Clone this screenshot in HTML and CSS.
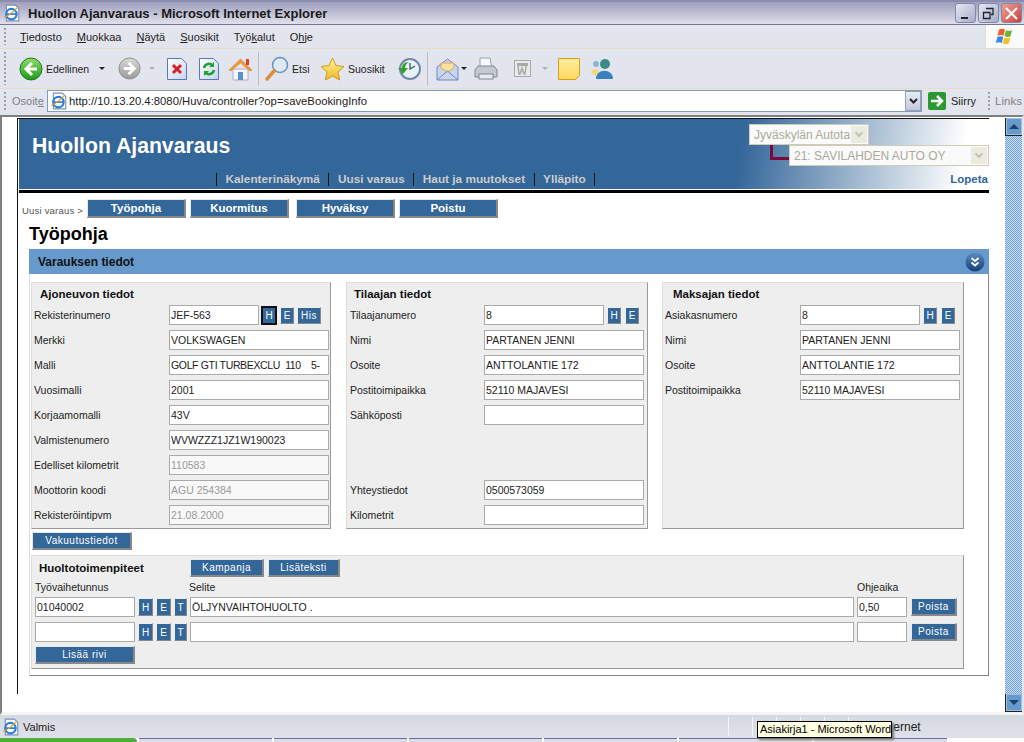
FILE: index.html
```html
<!DOCTYPE html>
<html lang="en">
<head>
    <meta charset="UTF-8">
    <title>Huollon Ajanvaraus - Microsoft Internet Explorer</title>
    <link rel="stylesheet" href="styles.css">
</head>
<body>
<div class="window">
    <svg class="defs" width="0" height="0">
        <defs>
            <linearGradient id="gGreen" x1="0" y1="0" x2="0" y2="1"><stop offset="0" stop-color="#8fdc6a"/><stop offset="1" stop-color="#1d9a1d"/></linearGradient>
            <linearGradient id="gGray" x1="0" y1="0" x2="0" y2="1"><stop offset="0" stop-color="#d8d8d8"/><stop offset="1" stop-color="#9a9a9a"/></linearGradient>
            <linearGradient id="gDoc" x1="0" y1="0" x2="1" y2="1"><stop offset="0" stop-color="#ffffff"/><stop offset="1" stop-color="#c4d4f0"/></linearGradient>
            <linearGradient id="gStar" x1="0" y1="0" x2="0" y2="1"><stop offset="0" stop-color="#fff6a0"/><stop offset="1" stop-color="#f0b820"/></linearGradient>
            <linearGradient id="gNote" x1="0" y1="0" x2="0" y2="1"><stop offset="0" stop-color="#ffeea0"/><stop offset="1" stop-color="#ffd860"/></linearGradient>
            <linearGradient id="gBall" x1="0" y1="0" x2="0" y2="1"><stop offset="0" stop-color="#5d8cc0"/><stop offset="1" stop-color="#123f75"/></linearGradient>
            <symbol id="ie" viewBox="0 0 16 16">
                <path d="M3 1h8l3 3v11H3z" fill="#fff" stroke="#7d8fb8"/>
                <circle cx="7.5" cy="9" r="4.6" fill="none" stroke="#2a7fd8" stroke-width="2"/>
                <path d="M3.5 9h8" stroke="#2a7fd8" stroke-width="1.5"/>
                <path d="M1 12c3-1 9-6 12-9" fill="none" stroke="#e0a020" stroke-width="1"/>
            </symbol>
        </defs>
    </svg>

    <div class="titlebar">
        <svg class="title-icon" width="18" height="18"><use href="#ie"/></svg>
        <span class="title-text">Huollon Ajanvaraus - Microsoft Internet Explorer</span>
        <div class="win-buttons">
            <div class="win-btn"><svg width="19" height="19"><path d="M5 14h7" stroke="#223" stroke-width="2"/></svg></div>
            <div class="win-btn"><svg width="19" height="19"><path d="M7 4.500h7v6h-2M4.500 8.500h6.500v6h-6.500z" fill="none" stroke="#223" stroke-width="1.300"/></svg></div>
            <div class="win-btn win-close"><svg width="19" height="19"><path d="M4 4l11 11M15 4L4 15" stroke="#fff" stroke-width="2.200"/></svg></div>
        </div>
    </div>

    <div class="menubar">
        <div class="grip"></div>
        <nav class="menu">
            <span><u>T</u>iedosto</span>
            <span><u>M</u>uokkaa</span>
            <span><u>N</u>äytä</span>
            <span><u>S</u>uosikit</span>
            <span>Työ<u>k</u>alut</span>
            <span>O<u>h</u>je</span>
        </nav>
        <div class="flag">
            <svg width="20" height="20" viewBox="0 0 20 20">
                <path d="M4 2.500c2 -1 4 -1 6 .3l-1.500 6c-2 -1.200 -4 -1 -6 0z" fill="#e8602a"/>
                <path d="M11 3.300c2 1 4 1 6 0l-1.500 6c-2 1 -4 .8 -6 -.3z" fill="#70b030"/>
                <path d="M2.300 10c2 -1 4 -1 6 0l-1.500 6c-2 -1 -4 -1 -6 0z" fill="#3a88e0"/>
                <path d="M9.300 10.500c2 1 4 1 6 0l-1.500 6c-2 1 -4 1 -6 0z" fill="#f8c020"/>
            </svg>
        </div>
    </div>

    <div class="toolbar">
        <div class="grip"></div>
        <svg class="tool back" width="24" height="24" viewBox="0 0 24 24"><circle cx="12" cy="12" r="11" fill="url(#gGreen)" stroke="#1b7c1b"/><path d="M13 6l-6 6 6 6M7 12h11" fill="none" stroke="#fff" stroke-width="3"/></svg>
        <span class="tool-label label-back">Edellinen</span>
        <span class="caret caret-back"></span>
        <svg class="tool forward" width="23" height="23" viewBox="0 0 24 24"><circle cx="12" cy="12" r="11" fill="url(#gGray)" stroke="#8c8c8c"/><path d="M11 6l6 6-6 6M17 12H6" fill="none" stroke="#fff" stroke-width="3"/></svg>
        <span class="caret caret-off"></span>
        <svg class="tool stop" width="20" height="24" viewBox="0 0 20 24"><path d="M.5 1.500h14l5 5v16H.5z" fill="url(#gDoc)" stroke="#5b78b8"/><path d="M6 8l8 8M14 8l-8 8" stroke="#d82020" stroke-width="3"/></svg>
        <svg class="tool refresh" width="20" height="24" viewBox="0 0 20 24"><path d="M.5 1.500h14l5 5v16H.5z" fill="url(#gDoc)" stroke="#5b78b8"/><path d="M5 11a5 5 0 0 1 9-2M15 13a5 5 0 0 1-9 2" fill="none" stroke="#20a030" stroke-width="2.500"/><path d="M15 5v5h-5zM5 19v-5h5z" fill="#20a030"/></svg>
        <svg class="tool home" width="25" height="24" viewBox="0 0 25 24"><path d="M5 12v11h15V12z" fill="#f4f4fa" stroke="#a8b0c8"/><path d="M1 13L12.500 2 24 13l-2 1-9.500-8L3 14z" fill="#f09a3a" stroke="#d87820" stroke-width=".5"/><rect x="18" y="2" width="3" height="6" fill="#d84020"/><rect x="10" y="15" width="5" height="8" fill="#5b90d0"/></svg>
        <span class="tool-sep sep-a"></span>
        <svg class="tool search" width="24" height="25" viewBox="0 0 24 25"><circle cx="15" cy="9" r="7.500" fill="#dbeaf8" stroke="#6b92b8" stroke-width="1.500"/><path d="M9.500 14.500L2 23" stroke="#d89040" stroke-width="3.500" stroke-linecap="round"/></svg>
        <span class="tool-label label-etsi">Etsi</span>
        <svg class="tool star" width="25" height="24" viewBox="0 0 25 24"><path d="M12.500 1l3.500 7.500 8 1-6 5.500 1.700 8-7.200-4-7.200 4 1.700-8-6-5.500 8-1z" fill="url(#gStar)" stroke="#cf9a10"/></svg>
        <span class="tool-label label-fav">Suosikit</span>
        <svg class="tool history" width="24" height="24" viewBox="0 0 24 24"><circle cx="13" cy="12" r="10" fill="#e8f0f8" stroke="#7088a8" stroke-width="2"/><path d="M13 6v6l5-3" fill="none" stroke="#456" stroke-width="1.300"/><path d="M1 11l5 6 5-6H8c0-3 2-5 4-6-5 0-7 3-7 6z" fill="#30a030"/></svg>
        <span class="tool-sep sep-b"></span>
        <svg class="tool mail" width="23" height="24" viewBox="0 0 23 24"><path d="M1 10L11.500 2 22 10v13H1z" fill="#c8d4f0" stroke="#7088c0"/><path d="M5 11V6h13v5l-6.500 4z" fill="#ffe0a0" stroke="#d8a860"/><path d="M1 23l10.500-9L22 23" fill="none" stroke="#7088c0"/></svg>
        <span class="caret caret-mail"></span>
        <svg class="tool print" width="24" height="24" viewBox="0 0 24 24"><path d="M6 1h10l2 10H6z" fill="#f4f8ff" stroke="#98a0b0"/><path d="M1 13l3-4h16l3 4v7H1z" fill="#c4c8d0" stroke="#808890"/><rect x="5" y="17" width="14" height="5" fill="#e8e8f0" stroke="#808890"/></svg>
        <svg class="tool word" width="17" height="17" viewBox="0 0 17 17"><rect x=".5" y=".5" width="16" height="16" fill="#eaeaea" stroke="#a8a8a8"/><rect x="3" y="3" width="11" height="3" fill="#a8a8a8"/><path d="M4 6l1 8h1l2-6 2 6h1l1-8" fill="none" stroke="#a8a8a8" stroke-width="1.500"/></svg>
        <span class="caret caret-off caret-word"></span>
        <svg class="tool note" width="22" height="22" viewBox="0 0 22 22"><path d="M.5.500h21v17l-4 4h-17z" fill="url(#gNote)" stroke="#d8a010"/></svg>
        <svg class="tool msn" width="24" height="22" viewBox="0 0 24 22"><circle cx="6" cy="6" r="3" fill="#88b8d8"/><path d="M1 15c0-5 8-5 8 0l-3 3z" fill="#f0d880"/><circle cx="15" cy="6" r="5" fill="#3a8a8a"/><path d="M6 21c0-11 17-11 17 0z" fill="#3a80c0"/></svg>
    </div>

    <div class="addressbar">
        <div class="grip"></div>
        <span class="addr-label">Osoit<u>e</u></span>
        <div class="addr-box">
            <svg width="18" height="18"><use href="#ie"/></svg>
            <span class="addr-url">http://10.13.20.4:8080/Huva/controller?op=saveBookingInfo</span>
            <span class="addr-drop"><svg width="9" height="7"><path d="M1 1l3.500 3.500L8 1" fill="none" stroke="#223" stroke-width="2"/></svg></span>
        </div>
        <svg class="go" width="18" height="18" viewBox="0 0 18 18"><rect width="18" height="18" rx="2" fill="#2a9a30"/><path d="M3 9h10M9 4l5 5-5 5" fill="none" stroke="#fff" stroke-width="2.500"/></svg>
        <span class="go-label">Siirry</span>
        <div class="grip grip-links"></div>
        <span class="links">Links</span>
    </div>

    <div class="viewport">
        <div class="page">
            <div class="frame">
                <header class="banner">
                    <h2 class="brand">Huollon Ajanvaraus</h2>
                    <div class="org-select org-main">Jyväskylän Autota<span class="org-drop"></span></div>
                    <span class="org-link"></span>
                    <div class="org-select org-sub">21: SAVILAHDEN AUTO OY<span class="org-drop"></span></div>
                    <nav class="mainnav">
                        <span>Kalenterinäkymä</span>
                        <span>Uusi varaus</span>
                        <span>Haut ja muutokset</span>
                        <span>Ylläpito</span>
                    </nav>
                    <span class="logout">Lopeta</span>
                </header>

                <div class="crumbs">
                    <span class="crumb-text">Uusi varaus &gt;</span>
                    <button class="btn-main">Työpohja</button>
                    <button class="btn-main btn-b">Kuormitus</button>
                    <button class="btn-main btn-c">Hyväksy</button>
                    <button class="btn-main btn-b">Poistu</button>
                </div>

                <h1 class="page-title">Työpohja</h1>

                <section class="booking">
                    <div class="booking-head">
                        <span>Varauksen tiedot</span>
                        <svg width="20" height="20" viewBox="0 0 20 20"><circle cx="10" cy="10" r="9.500" fill="url(#gBall)"/><path d="M6.500 6l3.500 3 3.500-3M6.500 10.500l3.500 3 3.500-3" fill="none" stroke="#fff" stroke-width="1.800"/></svg>
                    </div>
                    <div class="booking-body">
                        <div class="columns">
                            <div class="fields fields-car">
                                <h3>Ajoneuvon tiedot</h3>
                                <div class="row"><label>Rekisterinumero</label><input class="short" value="JEF-563"><button class="mini mini-first focus">H</button><button class="mini">E</button><button class="mini mini-his">His</button></div>
                                <div class="row"><label>Merkki</label><input value="VOLKSWAGEN"></div>
                                <div class="row"><label>Malli</label><input class="tight" value="GOLF GTI TURBEXCLU  110    5-"></div>
                                <div class="row"><label>Vuosimalli</label><input value="2001"></div>
                                <div class="row"><label>Korjaamomalli</label><input value="43V"></div>
                                <div class="row"><label>Valmistenumero</label><input value="WVWZZZ1JZ1W190023"></div>
                                <div class="row"><label>Edelliset kilometrit</label><input class="off" value="110583"></div>
                                <div class="row"><label>Moottorin koodi</label><input class="off" value="AGU 254384"></div>
                                <div class="row"><label>Rekisteröintipvm</label><input class="off" value="21.08.2000"></div>
                            </div>
                            <div class="fields fields-orderer">
                                <h3>Tilaajan tiedot</h3>
                                <div class="row"><label>Tilaajanumero</label><input class="mid" value="8"><button class="mini mini-first">H</button><button class="mini">E</button></div>
                                <div class="row"><label>Nimi</label><input value="PARTANEN JENNI"></div>
                                <div class="row"><label>Osoite</label><input value="ANTTOLANTIE 172"></div>
                                <div class="row"><label>Postitoimipaikka</label><input value="52110 MAJAVESI"></div>
                                <div class="row"><label>Sähköposti</label><input value=""></div>
                                <div class="row"></div>
                                <div class="row"></div>
                                <div class="row"><label>Yhteystiedot</label><input value="0500573059"></div>
                                <div class="row"><label>Kilometrit</label><input value=""></div>
                            </div>
                            <div class="fields fields-payer">
                                <h3>Maksajan tiedot</h3>
                                <div class="row"><label>Asiakasnumero</label><input class="mid" value="8"><button class="mini mini-first">H</button><button class="mini">E</button></div>
                                <div class="row"><label>Nimi</label><input value="PARTANEN JENNI"></div>
                                <div class="row"><label>Osoite</label><input value="ANTTOLANTIE 172"></div>
                                <div class="row"><label>Postitoimipaikka</label><input value="52110 MAJAVESI"></div>
                            </div>
                        </div>

                        <button class="btn-sub btn-insurance">Vakuutustiedot</button>

                        <div class="jobs">
                            <div class="jobs-head">
                                <h3>Huoltotoimenpiteet</h3>
                                <button class="btn-sub btn-campaign">Kampanja</button>
                                <button class="btn-sub btn-extra">Lisäteksti</button>
                            </div>
                            <div class="job-labels">
                                <span class="col-code">Työvaihetunnus</span>
                                <span class="col-desc">Selite</span>
                                <span>Ohjeaika</span>
                            </div>
                            <div class="job-row">
                                <input class="job-code" value="01040002">
                                <button class="mini job-mini">H</button><button class="mini job-mini">E</button><button class="mini job-mini job-t">T</button>
                                <input class="job-desc" value="ÖLJYNVAIHTOHUOLTO .">
                                <input class="job-time" value="0,50">
                                <button class="btn-sub btn-del">Poista</button>
                            </div>
                            <div class="job-row">
                                <input class="job-code" value="">
                                <button class="mini job-mini">H</button><button class="mini job-mini">E</button><button class="mini job-mini job-t">T</button>
                                <input class="job-desc" value="">
                                <input class="job-time" value="">
                                <button class="btn-sub btn-del">Poista</button>
                            </div>
                            <button class="btn-sub btn-addrow">Lisää rivi</button>
                        </div>
                    </div>
                </section>
            </div>
        </div>
        <div class="scrollbar">
            <span class="scroll-btn"><i class="arrow-up"></i></span>
            <span class="scroll-track"></span>
            <span class="scroll-btn"><i class="arrow-down"></i></span>
        </div>
    </div>

    <div class="statusbar">
        <svg width="18" height="18"><use href="#ie"/></svg>
        <span class="status-text">Valmis</span>
        <span class="status-cells"><i></i><i></i><i></i><i></i><i></i><i></i></span>
        <span class="status-zone">Internet</span>
        <div class="tooltip">Asiakirja1 - Microsoft Word</div>
    </div>
    <div class="taskbar">
        <span class="start"></span>
        <span class="task-btn"></span>
        <span class="task-btn"></span>
        <span class="task-btn"></span>
        <span class="task-btn"></span>
        <span class="task-btn"></span>
        <span class="task-btn"></span>
    </div>
</div>
</body>
</html>
```

FILE: styles.css
```css
/* Browser chrome */
html, body {
    margin: 0;
    padding: 0;
    overflow: hidden;
}

.window {
    position: relative;
    width: 1024px;
    height: 742px;
    display: flex;
    flex-direction: column;
    overflow: hidden;
    background-color: #e1e4ec;
    font-family: "Liberation Sans", Arial, sans-serif;
    font-size: 11px;
    color: #000;
}

.defs {
    position: absolute;
}

.titlebar {
    height: 25px;
    flex: none;
    display: flex;
    align-items: center;
    box-sizing: border-box;
    padding-left: 3px;
    border-top: 2px solid #8c8cb0;
    border-bottom: 1px solid #77778c;
    background: linear-gradient(#a0a0bc, #b8b8d0 40%, #e0e0ec);
}

.title-icon {
    margin-right: 7px;
}

.title-text {
    font-size: 13px;
    font-weight: bold;
    color: #1a1a1a;
}

.win-buttons {
    margin-left: auto;
    display: flex;
    gap: 2px;
    padding-right: 2px;
}

.win-btn {
    width: 21px;
    height: 20px;
    box-sizing: border-box;
    border: 1px solid #8088a8;
    border-radius: 3px;
    overflow: hidden;
    background: linear-gradient(135deg, #e6e8f2, #a8acc8);
}

.win-close {
    background: linear-gradient(135deg, #f0a090, #c84040);
}

.grip {
    width: 2px;
    align-self: stretch;
    margin: 3px 0 3px 4px;
    background: repeating-linear-gradient(#a0a0a8 0, #a0a0a8 2px, transparent 2px, transparent 4px);
}

.menubar {
    height: 24px;
    flex: none;
    display: flex;
    align-items: center;
    box-sizing: border-box;
    border-bottom: 1px solid #e8e0c4;
    background-color: #e2e5ed;
}

.menu {
    display: flex;
    font-size: 11px;
    color: #222;
    padding-left: 14px;
}

.menu span {
    margin-right: 15px;
}

.flag {
    margin-left: auto;
    width: 38px;
    height: 23px;
    display: flex;
    align-items: center;
    justify-content: center;
    border-left: 1px solid #e8e0c4;
    background-color: #fafafa;
}

.toolbar {
    height: 40px;
    flex: none;
    display: flex;
    align-items: center;
    box-sizing: border-box;
    border-bottom: 1px solid #e8e0c4;
    background-color: #e2e5ed;
}

.tool {
    flex: none;
}

.back { margin-left: 13px; }
.forward { margin-left: 13px; }
.stop { margin-left: 12px; }
.refresh { margin-left: 12px; }
.home { margin-left: 9px; }
.search { margin-left: 6px; }
.star { margin-left: 10px; }
.history { margin-left: 13px; }
.mail { margin-left: 8px; }
.print { margin-left: 7px; }
.word { margin-left: 16px; }
.note { margin-left: 10px; }
.msn { margin-left: 10px; }

.tool-label {
    margin-left: 3px;
    font-size: 10.5px;
    color: #222;
    flex: none;
}

.label-back { width: 42px; }
.label-etsi { width: 18px; }
.label-fav { width: 36px; }

.tool-sep {
    width: 1px;
    height: 34px;
    background-color: #b8bcc8;
}

.sep-a { margin-left: 5px; }
.sep-b { margin-left: 6px; }

.caret {
    width: 0;
    height: 0;
    border-left: 3px solid transparent;
    border-right: 3px solid transparent;
    border-top: 3px solid #222;
}

.caret-back { margin-left: 11px; }
.caret-off { margin-left: 8px; border-top-color: #b0b0b8; }
.caret-mail { margin-left: 2px; }
.caret-word { margin-left: 11px; }

.addressbar {
    height: 26px;
    flex: none;
    display: flex;
    align-items: center;
    box-sizing: border-box;
    padding-bottom: 2px;
    background-color: #e2e5ed;
}

.addr-label {
    margin-left: 6px;
    color: #808088;
    width: 35px;
}

.addr-box {
    width: 875px;
    height: 22px;
    box-sizing: border-box;
    display: flex;
    align-items: center;
    border: 1px solid #7f9db9;
    background-color: #fff;
    padding-left: 2px;
}

.addr-url {
    margin-left: 1px;
    font-size: 11.3px;
    color: #222;
}

.addr-drop {
    margin-left: auto;
    width: 16px;
    height: 20px;
    display: flex;
    align-items: center;
    justify-content: center;
    background: linear-gradient(#e8eaf4, #c4c8dc);
    border: 1px solid #98a0b8;
    box-sizing: border-box;
}

.go {
    margin-left: 6px;
}

.go-label {
    margin-left: 5px;
    color: #222;
}

.grip-links {
    margin-left: 12px;
}

.links {
    margin-left: 5px;
    font-size: 11.5px;
    color: #808088;
}

.viewport {
    flex: 1;
    display: flex;
    min-height: 0;
    box-sizing: border-box;
    padding-top: 1px;
    border-left: 2px solid #808080;
    border-right: 2px solid #e2e5ed;
    border-top: 2px solid #808080;
    border-bottom: 3px solid #f4f4f4;
    background-color: #fff;
}

.page {
    flex: 1;
    padding-left: 15px;
}

.scrollbar {
    width: 17px;
    display: flex;
    flex-direction: column;
}

.scroll-btn {
    height: 17px;
    display: flex;
    align-items: center;
    justify-content: center;
    background-color: #6699cc;
    box-shadow: inset 0 0 0 1px #9cc0e4;
    border-left: 1px solid #222;
    border-bottom: 1px solid #222;
}

.scroll-track {
    flex: 1;
    background-color: #88b0e0;
    background-image: repeating-conic-gradient(#6e9fdb 0 25%, #cfe0f4 0 50%);
    background-size: 2px 2px;
}

.arrow-up, .arrow-down {
    width: 0;
    height: 0;
    border-left: 5px solid transparent;
    border-right: 5px solid transparent;
}

.arrow-up { border-bottom: 5px solid #1f3f6a; }
.arrow-down { border-top: 5px solid #1f3f6a; }

/* Application page */
.frame {
    width: 972px;
    height: 576px;
    box-sizing: border-box;
    padding-left: 1px;
    border-left: 1px solid #111;
    border-top: 1px solid #111;
}

.banner {
    position: relative;
    height: 71px;
    box-sizing: border-box;
    border-bottom: 1px solid #fff;
    background: linear-gradient(98deg, #336699 0, #336699 74%, #ffffff 97%);
}

.brand {
    margin: 0;
    padding: 14px 0 0 13px;
    font-size: 21.2px;
    line-height: 25px;
    font-weight: bold;
    color: #fff;
}

.org-select {
    position: absolute;
    box-sizing: border-box;
    height: 21px;
    display: flex;
    align-items: center;
    padding-left: 4px;
    border: 1px solid #cfcdb8;
    background-color: #fafafa;
    font-size: 12px;
    color: #aba99a;
}

.org-main {
    left: 730px;
    top: 5px;
    width: 120px;
}

.org-sub {
    left: 770px;
    top: 26px;
    width: 200px;
}

.org-drop {
    position: absolute;
    right: 1px;
    top: 1px;
    width: 16px;
    height: 17px;
    background-color: #ecebe0;
}

.org-drop::after {
    content: "";
    position: absolute;
    left: 5px;
    top: 4px;
    width: 4px;
    height: 4px;
    border-right: 2px solid #c4c4b4;
    border-bottom: 2px solid #c4c4b4;
    transform: rotate(45deg);
}

.org-link {
    position: absolute;
    left: 751px;
    top: 26px;
    width: 17px;
    height: 12px;
    border-left: 3px solid #7a0a3a;
    border-bottom: 3px solid #7a0a3a;
}

.mainnav {
    position: absolute;
    left: 197px;
    top: 54px;
    display: flex;
    font-size: 11.8px;
    font-weight: bold;
    color: #ccc;
    border-right: 1px solid #111;
}

.mainnav span {
    border-left: 1px solid #111;
    padding: 0 8.5px;
    line-height: 13px;
}

.logout {
    position: absolute;
    right: 1px;
    top: 54px;
    font-size: 11.5px;
    font-weight: bold;
    color: #336699;
}

.crumbs {
    display: flex;
    align-items: center;
    border-top: 3px solid #000;
    padding: 6px 0 0 3px;
    height: 19px;
}

.crumb-text {
    width: 65px;
    flex: none;
    font-size: 9.5px;
    letter-spacing: 0.2px;
    white-space: nowrap;
    color: #555;
    padding-top: 3px;
}

button {
    font-family: "Liberation Sans", Arial, sans-serif;
    cursor: pointer;
    padding: 0;
    background-color: #336699;
    color: #fff;
    border-style: solid;
    border-width: 1px 2px 2px 1px;
    border-color: #e8e8e8 #888 #888 #e8e8e8;
}

.btn-main {
    width: 99px;
    height: 19px;
    font-size: 11.5px;
    font-weight: bold;
    margin-right: 4px;
}

.btn-b { margin-right: 7px; }
.btn-c { margin-right: 4px; }

.page-title {
    margin: 0;
    padding: 6px 0 5px 10px;
    font-size: 18px;
    line-height: 20px;
    color: #000;
}

.booking {
    width: 960px;
    margin-left: 10px;
}

.booking-head {
    height: 25px;
    display: flex;
    align-items: center;
    justify-content: space-between;
    padding: 0 4px 0 9px;
    background-color: #6699cc;
    font-size: 12px;
    font-weight: bold;
    color: #111;
}

.booking-body {
    box-sizing: border-box;
    height: 402px;
    padding: 8px 0 0 1px;
    border-right: 1px solid #888;
    border-bottom: 1px solid #888;
    border-left: 1px solid #ddd;
}

.columns {
    display: flex;
    height: 247px;
}

.fields {
    box-sizing: border-box;
    height: 247px;
    background-color: #eee;
    border: 1px solid #ddd;
    border-right-color: #999;
    border-bottom-color: #999;
    padding-left: 2px;
}

.fields-car { width: 300px; margin-right: 15px; }
.fields-orderer { width: 302px; margin-right: 14px; }
.fields-payer { width: 302px; }

.fields h3, .jobs h3 {
    margin: 0;
    font-size: 11.5px;
    line-height: 14px;
    color: #111;
}

.fields h3 {
    padding: 4px 0 4px 6px;
}

.fields-orderer h3 { padding-left: 5px; }
.fields-payer h3 { padding-left: 8px; }

.row {
    height: 25px;
    display: flex;
    align-items: flex-start;
}

.row label {
    width: 135px;
    flex: none;
    font-size: 10.5px;
    line-height: 20px;
    color: #222;
}

.fields-orderer .row label { padding-left: 1px; box-sizing: border-box; }

input {
    box-sizing: border-box;
    width: 160px;
    height: 20px;
    padding: 0 1px;
    border: 1px solid #aaa;
    background-color: #fff;
    font-family: "Liberation Sans", Arial, sans-serif;
    font-size: 10.5px;
    color: #222;
}

input.short { width: 90px; }
input.mid { width: 120px; }
input.off { color: #999; background-color: #f8f8f8; }
input.tight { letter-spacing: -0.35px; }

.mini {
    width: 14px;
    height: 17px;
    margin: 2px 4px 0 0;
    font-size: 10px;
    border-width: 1px;
    border-color: #eee #888 #888 #eee;
}

.mini-first { margin-left: 3px; }
.mini-his { width: 24px; margin-left: -1px; letter-spacing: 0.5px; }

.focus {
    outline: 2px solid #111;
    outline-offset: -1px;
}

.btn-sub {
    height: 18px;
    font-size: 10px;
    letter-spacing: 0.5px;
}

.btn-insurance {
    width: 100px;
    margin: 3px 0 0 1px;
    display: block;
}

.jobs {
    box-sizing: border-box;
    width: 933px;
    height: 114px;
    margin-top: 5px;
    background-color: #eee;
    border: 1px solid #ddd;
    border-right-color: #999;
    border-bottom-color: #999;
}

.jobs-head {
    display: flex;
    align-items: center;
    height: 20px;
    padding-top: 2px;
}

.jobs h3 {
    width: 151px;
    padding-left: 7px;
}

.btn-campaign { width: 74px; margin-right: 4px; }
.btn-extra { width: 72px; }

.job-labels {
    display: flex;
    height: 16px;
    padding: 3px 0 0 3px;
    font-size: 10.5px;
    color: #222;
}

.col-code { width: 154px; }
.col-desc { width: 668px; }

.job-row {
    display: flex;
    height: 25px;
    padding-left: 3px;
}

.job-code { width: 100px; margin-right: 3px; }
.job-desc { width: 664px; margin-right: 3px; }
.job-time { width: 50px; margin-right: 3px; }

.job-mini {
    width: 15px;
    height: 18px;
    margin: 1px 3px 0 0;
}

.job-t { width: 13px; }

.btn-del {
    width: 46px;
    margin: 1px 0 0 1px;
}

.btn-addrow {
    width: 100px;
    margin: -1px 0 0 3px;
    display: block;
}

/* Status and task bars */
.statusbar {
    position: relative;
    height: 23px;
    flex: none;
    display: flex;
    align-items: center;
    box-sizing: border-box;
    padding-left: 2px;
    background: linear-gradient(#d6d8e2, #dfe1ea);
}

.status-text {
    margin-left: 3px;
    color: #222;
}

.status-cells {
    display: flex;
    position: absolute;
    left: 728px;
    top: 2px;
}

.status-cells i {
    width: 24px;
    height: 19px;
    box-sizing: border-box;
    border-left: 1px solid #f4f4f4;
}

.status-zone {
    position: absolute;
    left: 880px;
    top: 5px;
    font-size: 12px;
    color: #222;
}

.tooltip {
    position: absolute;
    left: 757px;
    top: 6px;
    box-sizing: border-box;
    width: 135px;
    height: 17px;
    padding-left: 2px;
    line-height: 15px;
    border: 1px solid #000;
    background-color: #ffffe1;
    box-shadow: 2px 2px 2px #777;
    font-size: 11px;
    color: #000;
    white-space: nowrap;
}

.taskbar {
    height: 4px;
    flex: none;
    display: flex;
    gap: 2px;
    background-color: #fff;
}

.start {
    width: 137px;
    background-color: #4caf3c;
    border-radius: 0 4px 0 0;
}

.task-btn {
    width: 133px;
    background-color: #dcdce6;
    border-top: 1px solid #6a70a0;
}
```
